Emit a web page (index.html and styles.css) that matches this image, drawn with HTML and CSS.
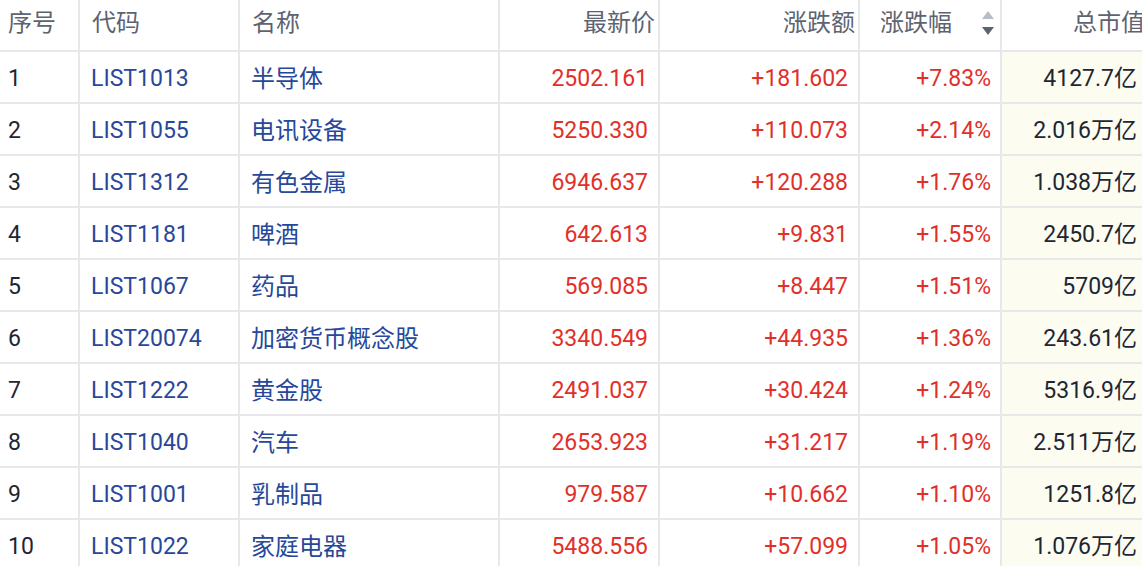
FILE: index.html
```html
<!DOCTYPE html>
<html lang="zh">
<head>
<meta charset="utf-8">
<title>板块排行</title>
<link rel="stylesheet" href="styles.css">
</head>
<body>
<table class="board">
  <colgroup>
    <col class="c-idx"><col class="c-code"><col class="c-name"><col class="c-price"><col class="c-chg"><col class="c-pct"><col class="c-cap">
  </colgroup>
  <thead>
    <tr>
      <th class="t-idx">序号</th>
      <th class="t-code">代码</th>
      <th class="t-name">名称</th>
      <th class="t-num">最新价</th>
      <th class="t-num">涨跌额</th>
      <th class="t-sort"><span class="sort-wrap"><span>涨跌幅</span><span class="sort-icon"><i class="tri up"></i><i class="tri down"></i></span></span></th>
      <th class="t-cap">总市值</th>
    </tr>
  </thead>
  <tbody>
    <tr><td class="idx">1</td><td class="code">LIST1013</td><td class="name">半导体</td><td class="price">2502.161</td><td class="chg">+181.602</td><td class="pct">+7.83%</td><td class="cap">4127.7亿</td></tr>
    <tr><td class="idx">2</td><td class="code">LIST1055</td><td class="name">电讯设备</td><td class="price">5250.330</td><td class="chg">+110.073</td><td class="pct">+2.14%</td><td class="cap">2.016万亿</td></tr>
    <tr><td class="idx">3</td><td class="code">LIST1312</td><td class="name">有色金属</td><td class="price">6946.637</td><td class="chg">+120.288</td><td class="pct">+1.76%</td><td class="cap">1.038万亿</td></tr>
    <tr><td class="idx">4</td><td class="code">LIST1181</td><td class="name">啤酒</td><td class="price">642.613</td><td class="chg">+9.831</td><td class="pct">+1.55%</td><td class="cap">2450.7亿</td></tr>
    <tr><td class="idx">5</td><td class="code">LIST1067</td><td class="name">药品</td><td class="price">569.085</td><td class="chg">+8.447</td><td class="pct">+1.51%</td><td class="cap">5709亿</td></tr>
    <tr><td class="idx">6</td><td class="code">LIST20074</td><td class="name">加密货币概念股</td><td class="price">3340.549</td><td class="chg">+44.935</td><td class="pct">+1.36%</td><td class="cap">243.61亿</td></tr>
    <tr><td class="idx">7</td><td class="code">LIST1222</td><td class="name">黄金股</td><td class="price">2491.037</td><td class="chg">+30.424</td><td class="pct">+1.24%</td><td class="cap">5316.9亿</td></tr>
    <tr><td class="idx">8</td><td class="code">LIST1040</td><td class="name">汽车</td><td class="price">2653.923</td><td class="chg">+31.217</td><td class="pct">+1.19%</td><td class="cap">2.511万亿</td></tr>
    <tr><td class="idx">9</td><td class="code">LIST1001</td><td class="name">乳制品</td><td class="price">979.587</td><td class="chg">+10.662</td><td class="pct">+1.10%</td><td class="cap">1251.8亿</td></tr>
    <tr><td class="idx">10</td><td class="code">LIST1022</td><td class="name">家庭电器</td><td class="price">5488.556</td><td class="chg">+57.099</td><td class="pct">+1.05%</td><td class="cap">1.076万亿</td></tr>
  </tbody>
</table>
</body>
</html>
```
FILE: styles.css
```css
html, body {
  margin: 0;
  padding: 0;
  background: #ffffff;
  overflow: hidden;
}

body {
  font-family: Roboto, "Noto Sans CJK SC", sans-serif;
  font-size: 23px;
  color: #1f2633;
}

.board {
  table-layout: fixed;
  border-collapse: separate;
  border-spacing: 0;
  width: 1148px;
}

.c-idx { width: 80px; }
.c-code { width: 160px; }
.c-name { width: 260px; }
.c-price { width: 160px; }
.c-chg { width: 200px; }
.c-pct { width: 142px; }
.c-cap { width: 146px; }

.board th,
.board td {
  box-sizing: border-box;
  border-right: 2px solid #e8e8ea;
  border-bottom: 2px solid #e8e8ea;
  padding: 0;
  white-space: nowrap;
  overflow: hidden;
  vertical-align: middle;
  line-height: 28px;
}

.board th {
  height: 52px;
  font-weight: normal;
  font-size: 24px;
  color: #5d6370;
  font-family: "Noto Sans CJK SC", sans-serif;
  padding-bottom: 8px;
}

.board td {
  height: 52px;
  padding-top: 3px;
}

.t-idx { text-align: left; padding-left: 8px !important; }
.t-code, .t-name { text-align: left; padding-left: 12px !important; }
.t-num { text-align: right; padding-right: 3px !important; }
.t-sort { text-align: right; padding-right: 6px !important; }
.t-cap { text-align: right; padding-right: 1px !important; }

.sort-wrap {
  display: inline-flex;
  align-items: center;
  gap: 30px;
}

.sort-icon {
  display: flex;
  flex-direction: column;
  gap: 8px;
  width: 12px;
  align-items: center;
  margin-top: 4px;
}

.tri {
  display: block;
  width: 0;
  height: 0;
  border-left: 6px solid transparent;
  border-right: 6px solid transparent;
}

.tri.up { border-bottom: 8px solid #b9bdc5; }
.tri.down { border-top: 8px solid #5d6370; }

.idx { padding-left: 8px !important; color: #1f2633; }
.code { padding-left: 11px !important; color: #27489a; }
.name { padding-left: 11px !important; padding-top: 3px !important; color: #27489a; font-size: 24px; }
.price, .chg, .pct, .cap { text-align: right; }
.price { padding-right: 10px !important; color: #e1302a; }
.chg { padding-right: 10px !important; color: #e1302a; }
.pct { padding-right: 9px !important; color: #e1302a; }
.cap { padding-right: 9px !important; color: #1f2633; }
.board td.cap { background: #fcfcf1; }
```
